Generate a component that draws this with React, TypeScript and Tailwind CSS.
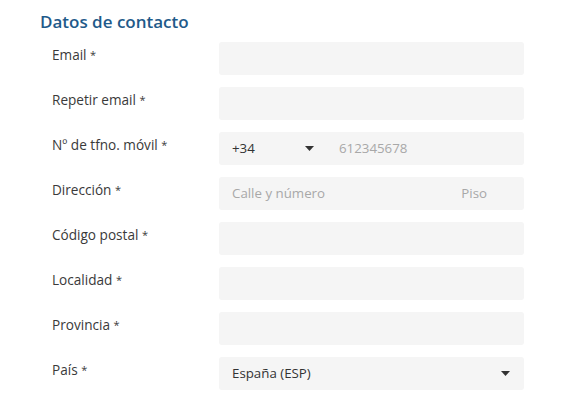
const Caret = () => (
  <svg width="9" height="5" viewBox="0 0 9 5" className="shrink-0">
    <path d="M0 0h9L4.5 5z" fill="#333" />
  </svg>
);

const fields = [
  "Email",
  "Repetir email",
  "Nº de tfno. móvil",
  "Dirección",
  "Código postal",
  "Localidad",
  "Provincia",
  "País",
];

function Control({ idx }: { idx: number }) {
  const base = "h-[33px] w-[305px] rounded-[3px] bg-[#f5f5f5] flex items-center text-[13.3px]";
  if (idx === 2)
    return (
      <div className={base}>
        <div className="flex items-center w-[107px] pl-[13px] pr-[12px] justify-between text-[#333]">
          <span>+34</span>
          <Caret />
        </div>
        <span className="pl-[13px] text-[#a8a8a8]">612345678</span>
      </div>
    );
  if (idx === 3)
    return (
      <div className={`${base} justify-between pl-[13px] pr-[37px] text-[#a8a8a8]`}>
        <span>Calle y número</span>
        <span>Piso</span>
      </div>
    );
  if (idx === 7)
    return (
      <div className={`${base} justify-between pl-[13px] pr-[14px] text-[#333]`}>
        <span>España (ESP)</span>
        <Caret />
      </div>
    );
  return <div className={base} />;
}

export default function App() {
  return (
    <div
      className="w-[564px] h-[409px] bg-white pl-[40px] pt-[10px]"
      style={{ fontFamily: '"Open Sans", sans-serif' }}
    >
      <h2 className="text-[17px] font-semibold text-[#1f5a8a] leading-[24px] mb-[8px]">
        Datos de contacto
      </h2>
      <div className="flex flex-col gap-[12px]">
        {fields.map((f, i) => (
          <div key={f} className="flex items-start">
            <label className="w-[179px] pl-[12px] pt-[3px] text-[13.6px] leading-[20px] text-[#3a3a3a]">
              {f} <span className="text-[11px] align-[1px]">*</span>
            </label>
            <Control idx={i} />
          </div>
        ))}
      </div>
    </div>
  );
}
